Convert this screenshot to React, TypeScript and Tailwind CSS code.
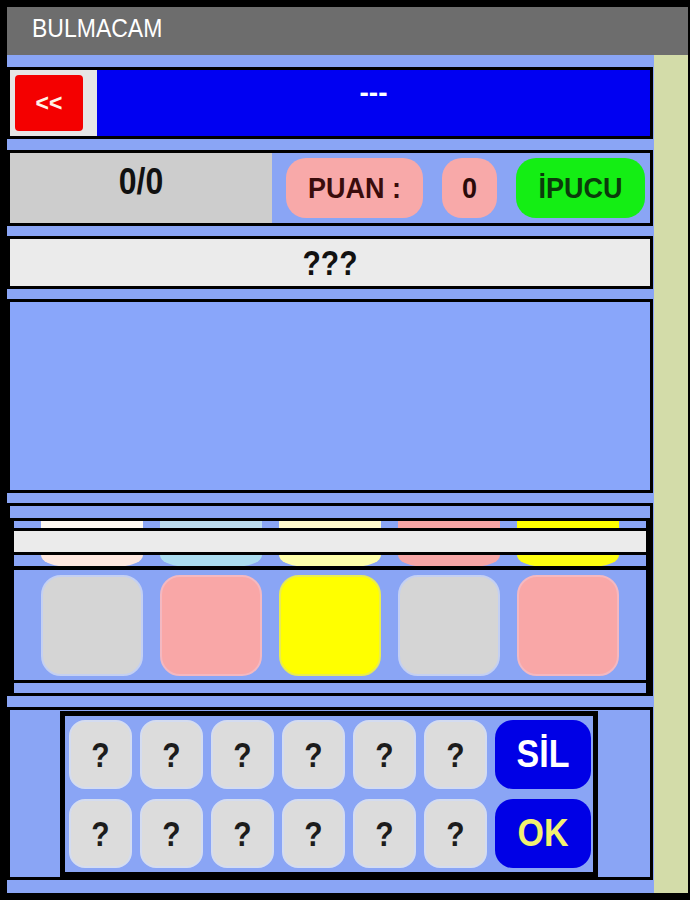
const tileColumns = [
  { top: "bg-[#fffaf3]", bottom: "bg-[#fde7df]", tile: "bg-[#d5d5d5] border-[#c4d0f2]" },
  { top: "bg-[#bcdcf0]", bottom: "bg-[#abdcf0]", tile: "bg-[#f9a7a7] border-[#f4b8c0]" },
  { top: "bg-[#fffacc]", bottom: "bg-[#ffffaa]", tile: "bg-[#ffff00] border-[#e8ec50]" },
  { top: "bg-[#f6a4a4]", bottom: "bg-[#f6a6a6]", tile: "bg-[#d5d5d5] border-[#c4d0f2]" },
  { top: "bg-[#ffff00]", bottom: "bg-[#ffff10]", tile: "bg-[#f9a7a7] border-[#f4b8c0]" },
];

const letterKeys = [0, 1, 2, 3, 4, 5];

function Key() {
  return (
    <button
      type="button"
      className="flex h-[69px] w-[63px] items-center justify-center rounded-[16px] border-2 border-[#d4dcf0] bg-[#dcdcdc] text-[30px] font-bold text-[#1c1c1c]"
    >
      <span className="inline-block scale-y-[1.15]">?</span>
    </button>
  );
}

export default function App() {
  return (
    <div className="min-h-[900px] w-[690px] bg-black pb-[7px] pl-[7px] pr-[2px] pt-[7px] font-['Liberation_Sans',Arial,sans-serif]">
      <header className="h-[48px] bg-[#6d6d6d] pl-[25px] pt-[8px] text-[23px] leading-[26px] text-white">
        <span className="inline-block scale-y-[1.1]">BULMACAM</span>
      </header>

      <div className="flex h-[838px]">
        <main className="flex w-[647px] flex-col bg-[#8aa5f5] pt-[12px]">
          {/* title row */}
          <section className="flex h-[72px] w-[646px] border-[3px] border-black">
            <div className="flex w-[87px] items-center bg-[#e6e6e6] pl-[5px]">
              <button
                type="button"
                className="flex h-[56px] w-[68px] items-center justify-center rounded-[4px] bg-[#f40000] text-[23px] font-bold text-[#fff2e6]"
              >
                &lt;&lt;
              </button>
            </div>
            <div className="flex-1 bg-[#0000f2] pt-[9px] text-center text-[28px] font-bold leading-[28px] text-white">
              ---
            </div>
          </section>

          {/* score row */}
          <section className="mt-[11px] flex h-[76px] w-[646px] border-[3px] border-black">
            <div className="w-[262px] bg-[#cdcdcd] pt-[12px] text-center text-[32px] font-bold leading-[32px] text-[#111]">
              <span className="inline-block scale-y-[1.18]">0/0</span>
            </div>
            <div className="flex flex-1 items-center gap-[19px] pl-[14px]">
              <div className="flex h-[60px] w-[137px] items-center justify-center rounded-[20px] bg-[#f8a9a9] text-[27px] font-bold text-[#3a0c0c]">
                <span className="inline-block scale-y-[1.1]">PUAN :</span>
              </div>
              <div className="flex h-[60px] w-[55px] items-center justify-center rounded-[20px] bg-[#f8a9a9] text-[27px] font-bold text-[#2a0a0a]">
                <span className="inline-block scale-y-[1.1]">0</span>
              </div>
              <button
                type="button"
                className="flex h-[60px] w-[129px] items-center justify-center rounded-[20px] bg-[#14ee14] text-[27px] font-bold text-[#0b3b0b]"
              >
                <span className="inline-block scale-y-[1.1]">İPUCU</span>
              </button>
            </div>
          </section>

          {/* question row */}
          <section className="mt-[10px] flex h-[53px] w-[646px] items-center justify-center border-[3px] border-black bg-[#ebebeb] text-[30px] font-bold text-[#111]">
            <span className="inline-block scale-y-[1.15]">???</span>
          </section>

          {/* board */}
          <section className="mt-[10px] h-[194px] w-[646px] border-[3px] border-black bg-[#89a6fa]" />

          {/* tiles */}
          <section className="mt-[10px] flex h-[193px] w-[646px] flex-col border-[3px] border-black">
            <div className="h-[12px]" />
            <div className="flex flex-1 flex-col border-x-4 border-t-[3px] border-black">
              <div className="flex h-[7px] justify-center gap-[17px]">
                {tileColumns.map((col, i) => (
                  <div key={i} className={`h-full w-[102px] ${col.top}`} />
                ))}
              </div>
              <div className="h-[3px] bg-black" />
              <div className="h-[21px] bg-[#ebebeb]" />
              <div className="h-[3px] bg-black" />
              <div className="flex h-[11px] justify-center gap-[17px]">
                {tileColumns.map((col, i) => (
                  <div
                    key={i}
                    className={`h-full w-[102px] rounded-bl-[22px_11px] rounded-br-[22px_11px] ${col.bottom}`}
                  />
                ))}
              </div>
              <div className="h-[4px] bg-black" />
              <div className="flex h-[110px] items-start justify-center gap-[17px] pt-[5px]">
                {tileColumns.map((col, i) => (
                  <div
                    key={i}
                    className={`h-[101px] w-[102px] rounded-[20px] border-2 ${col.tile}`}
                  />
                ))}
              </div>
              <div className="h-[3px] bg-black" />
              <div className="h-[10px]" />
            </div>
          </section>

          {/* keypad */}
          <section className="mt-[11px] flex h-[173px] w-[646px] border-[3px] border-black">
            <div className="w-[50px]" />
            <div className="mt-[1px] flex w-[538px] flex-col gap-[10px] border-[5px] border-black pl-[4px] pt-[4px]">
              <div className="flex gap-[8px]">
                {letterKeys.map((k) => (
                  <Key key={k} />
                ))}
                <button
                  type="button"
                  className="flex h-[69px] w-[96px] items-center justify-center rounded-[18px] bg-[#0000e6] text-[34px] font-bold text-white"
                >
                  <span className="inline-block scale-y-[1.12]">SİL</span>
                </button>
              </div>
              <div className="flex gap-[8px]">
                {letterKeys.map((k) => (
                  <Key key={k} />
                ))}
                <button
                  type="button"
                  className="flex h-[69px] w-[96px] items-center justify-center rounded-[18px] bg-[#0000e6] text-[34px] font-bold text-[#f2f070]"
                >
                  <span className="inline-block scale-y-[1.12]">OK</span>
                </button>
              </div>
            </div>
            <div className="flex-1" />
          </section>
        </main>
        <aside className="flex-1 bg-[#d3dca9]" />
      </div>
    </div>
  );
}
